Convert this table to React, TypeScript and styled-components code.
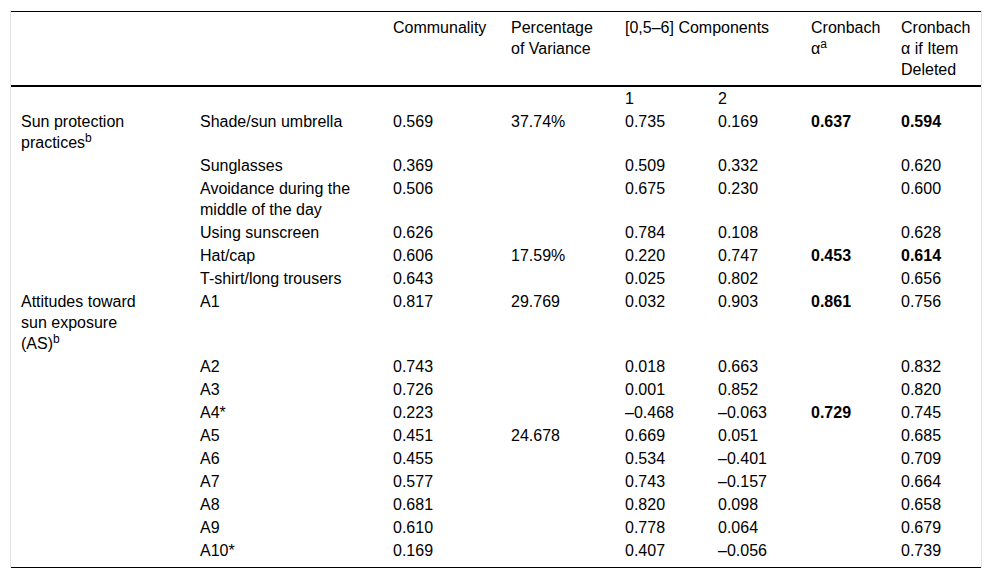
import { Fragment } from 'react';
import styled, { createGlobalStyle } from 'styled-components';

const GlobalStyle = createGlobalStyle`
  html, body {
    margin: 0;
    padding: 0;
    background: #ffffff;
  }
`;

const Wrapper = styled.div`
  width: 970px;
  margin: 10px 10px 0;
  padding-top: 1px;
  border-left: 1px solid #e4e4e4;
  border-right: 1px solid #e4e4e4;
`;

const Table = styled.table`
  width: 970px;
  table-layout: fixed;
  border-collapse: collapse;

  color: #000000;
  font-family: 'Liberation Sans', Arial, sans-serif;
  font-size: 16px;
  line-height: 21px;
`;

const Head = styled.thead`
  border-top: 1px solid #000000;
  border-bottom: 2px solid #000000;
`;

const Body = styled.tbody`
  border-bottom: 1px solid #000000;
`;

const HeadCell = styled.th`
  padding: 5px 10px;
  vertical-align: top;
  text-align: left;
  font-weight: 400;
`;

const Cell = styled.td<{ $bold?: boolean; $last?: boolean }>`
  padding: 1px 10px ${(p) => (p.$last ? '6px' : '1px')};
  vertical-align: top;
  text-align: left;
  font-weight: ${(p) => (p.$bold ? 700 : 400)};
`;

const GroupCell = styled(Cell)`
  padding-right: 40px;
`;

const Sup = styled.sup`
  font-size: 12px;
  line-height: 0;
  vertical-align: 6px;
`;

const widths = [179, 193, 118, 114, 93, 93, 90, 90];

type Row = {
  group?: string;
  item: string;
  comm: string;
  pct?: string;
  c1: string;
  c2: string;
  alpha?: string;
  deleted: string;
  deletedBold?: boolean;
};

const rows: Row[] = [
  { group: 'Sun protection practices', item: 'Shade/sun umbrella', comm: '0.569', pct: '37.74%', c1: '0.735', c2: '0.169', alpha: '0.637', deleted: '0.594', deletedBold: true },
  { item: 'Sunglasses', comm: '0.369', c1: '0.509', c2: '0.332', deleted: '0.620' },
  { item: 'Avoidance during the middle of the day', comm: '0.506', c1: '0.675', c2: '0.230', deleted: '0.600' },
  { item: 'Using sunscreen', comm: '0.626', c1: '0.784', c2: '0.108', deleted: '0.628' },
  { item: 'Hat/cap', comm: '0.606', pct: '17.59%', c1: '0.220', c2: '0.747', alpha: '0.453', deleted: '0.614', deletedBold: true },
  { item: 'T-shirt/long trousers', comm: '0.643', c1: '0.025', c2: '0.802', deleted: '0.656' },
  { group: 'Attitudes toward sun exposure (AS)', item: 'A1', comm: '0.817', pct: '29.769', c1: '0.032', c2: '0.903', alpha: '0.861', deleted: '0.756' },
  { item: 'A2', comm: '0.743', c1: '0.018', c2: '0.663', deleted: '0.832' },
  { item: 'A3', comm: '0.726', c1: '0.001', c2: '0.852', deleted: '0.820' },
  { item: 'A4*', comm: '0.223', c1: '–0.468', c2: '–0.063', alpha: '0.729', deleted: '0.745' },
  { item: 'A5', comm: '0.451', pct: '24.678', c1: '0.669', c2: '0.051', deleted: '0.685' },
  { item: 'A6', comm: '0.455', c1: '0.534', c2: '–0.401', deleted: '0.709' },
  { item: 'A7', comm: '0.577', c1: '0.743', c2: '–0.157', deleted: '0.664' },
  { item: 'A8', comm: '0.681', c1: '0.820', c2: '0.098', deleted: '0.658' },
  { item: 'A9', comm: '0.610', c1: '0.778', c2: '0.064', deleted: '0.679' },
  { item: 'A10*', comm: '0.169', c1: '0.407', c2: '–0.056', deleted: '0.739' },
];

export default function App() {
  return (
    <Fragment>
      <GlobalStyle />
      <Wrapper>
        <Table>
          <colgroup>
            {widths.map((w, i) => (
              <col key={i} style={{ width: w }} />
            ))}
          </colgroup>
          <Head>
            <tr>
              <HeadCell />
              <HeadCell />
              <HeadCell>Communality</HeadCell>
              <HeadCell>Percentage of Variance</HeadCell>
              <HeadCell colSpan={2}>[0,5–6] Components</HeadCell>
              <HeadCell>
                Cronbach α<Sup>a</Sup>
              </HeadCell>
              <HeadCell>Cronbach α if Item Deleted</HeadCell>
            </tr>
          </Head>
          <Body>
            <tr>
              <Cell />
              <Cell />
              <Cell />
              <Cell />
              <Cell>1</Cell>
              <Cell>2</Cell>
              <Cell />
              <Cell />
            </tr>
            {rows.map((row, i) => {
              const last = i === rows.length - 1;
              return (
                <tr key={row.item}>
                  <GroupCell $last={last}>
                    {row.group && (
                      <>
                        {row.group}
                        <Sup>b</Sup>
                      </>
                    )}
                  </GroupCell>
                  <Cell $last={last}>{row.item}</Cell>
                  <Cell $last={last}>{row.comm}</Cell>
                  <Cell $last={last}>{row.pct}</Cell>
                  <Cell $last={last}>{row.c1}</Cell>
                  <Cell $last={last}>{row.c2}</Cell>
                  <Cell $last={last} $bold>
                    {row.alpha}
                  </Cell>
                  <Cell $last={last} $bold={row.deletedBold}>
                    {row.deleted}
                  </Cell>
                </tr>
              );
            })}
          </Body>
        </Table>
      </Wrapper>
    </Fragment>
  );
}
